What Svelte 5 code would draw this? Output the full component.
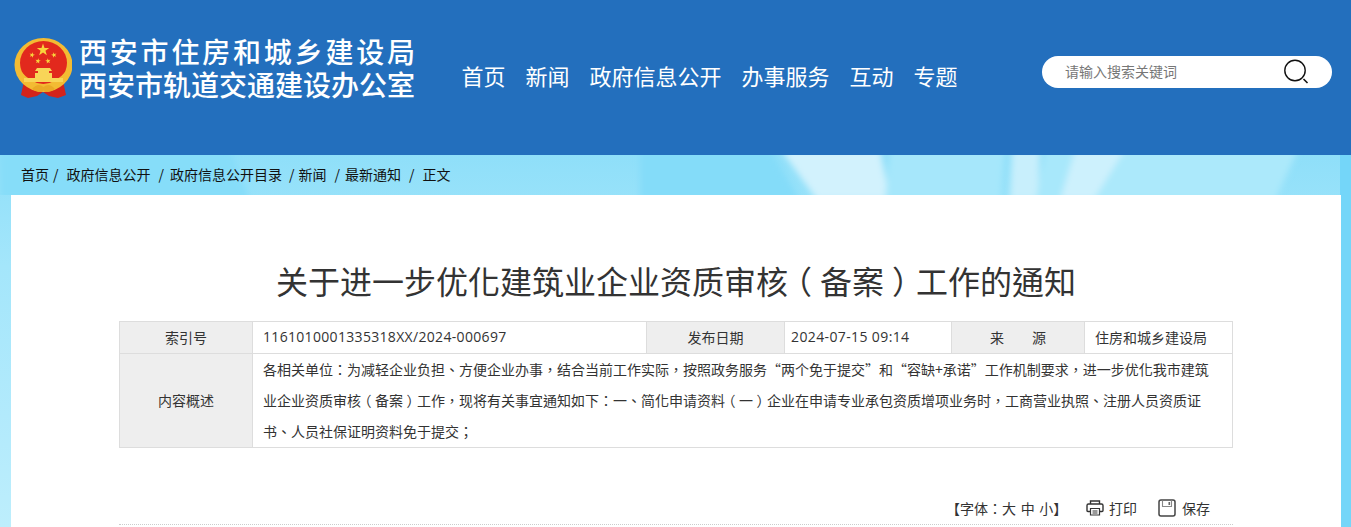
<script>
	// before / after: the gaps around each slash differ in the original markup
	const crumbs = [
		{ label: '首页', before: 4, after: 8 },
		{ label: '政府信息公开', before: 8, after: 6 },
		{ label: '政府信息公开目录', before: 7, after: 4 },
		{ label: '新闻', before: 8, after: 5 },
		{ label: '最新通知', before: 8, after: 8 }
	];
	const nav = ['首页', '新闻', '政府信息公开', '办事服务', '互动', '专题'];
	const title = '关于进一步优化建筑业企业资质审核（备案）工作的通知';
	const summary = [
		'各相关单位：为减轻企业负担、方便企业办事，结合当前工作实际，按照政务服务“两个免于提交”和“容缺+承诺”工作机制要求，进一步优化我市建筑',
		'业企业资质审核（备案）工作，现将有关事宜通知如下：一、简化申请资料（一）企业在申请专业承包资质增项业务时，工商营业执照、注册人员资质证',
		'书、人员社保证明资料免于提交；'
	];

	// the reference centres full-width brackets in their cell, so they get their own span
	const pieces = (text) => text.split(/([（）])/).filter(Boolean);
	const isBracket = (p) => p === '（' || p === '）';

	const star = (cx, cy, r, rot = 0) => {
		let pts = [];
		for (let i = 0; i < 10; i++) {
			const a = ((i * 36 - 90 + rot) * Math.PI) / 180;
			const d = i % 2 ? r * 0.4 : r;
			pts.push(`${(cx + d * Math.cos(a)).toFixed(2)},${(cy + d * Math.sin(a)).toFixed(2)}`);
		}
		return pts.join(' ');
	};
</script>

<div class="page">
	<header class="top">
		<div class="brand">
			<svg class="emblem" viewBox="0 0 58 62" width="58" height="62" aria-hidden="true">
				<path d="M10 44 L7 58 L14 61 L23 59 L29 55 L35 59 L44 61 L52 58 L49 44 Z" fill="#d3231b" />
				<ellipse cx="29.5" cy="28" rx="29" ry="27" fill="#f3bb33" />
				<ellipse cx="29.5" cy="26" rx="23.5" ry="22" fill="#e2291d" />
				<path d="M5 32 Q29 62 54 32 L50 46 Q29 58 9 46 Z" fill="#f3bb33" />
				<polygon points={star(29, 13, 6.5)} fill="#f9d33c" />
				<polygon points={star(18, 18, 2.9, 15)} fill="#f9d33c" />
				<polygon points={star(40, 18, 2.9, -15)} fill="#f9d33c" />
				<polygon points={star(24, 24, 2.9, 10)} fill="#f9d33c" />
				<polygon points={star(34, 24, 2.9, -10)} fill="#f9d33c" />
				<path d="M23 31 H36 L38 34 H35 V36 H38 V41 H21 V36 H24 V34 H21 Z" fill="#f8d558" />
				<rect x="10" y="41" width="39" height="4" fill="#f8d558" />
				<path d="M18 52 Q24 45 29.5 50 Q35 45 41 52 Q35 57 29.5 53.5 Q24 57 18 52 Z" fill="#eaa926" />
			</svg>
			<div class="names">
				<div class="first">西安市住房和城乡建设局</div>
				<div>西安市轨道交通建设办公室</div>
			</div>
		</div>
		<nav class="nav">
			{#each nav as item}
				<span>{item}</span>
			{/each}
		</nav>
		<div class="search">
			<span>请输入搜索关键词</span>
			<svg viewBox="0 0 26 26" width="26" height="26" aria-hidden="true">
				<circle cx="12" cy="11.5" r="10.2" fill="none" stroke="#111" stroke-width="1.4" />
				<path d="M20.5 20 L24.5 24" stroke="#111" stroke-width="1.6" fill="none" />
			</svg>
		</div>
	</header>

	<div class="lower">
		<svg class="rays" viewBox="0 0 1351 40" width="1351" height="40" aria-hidden="true">
			<defs>
				<filter id="soft"><feGaussianBlur stdDeviation="3" /></filter>
			</defs>
			<g filter="url(#soft)">
				<polygon points="0,-5 230,-5 250,45 0,45" fill="#86ddf9" />
				<polygon points="640,-5 770,-5 800,45 640,45" fill="#84dcf9" />
				<polygon points="781,-5 880,-5 890,45 817,45" fill="#d2f2fd" />
				<polygon points="890,-5 1005,-5 1000,45 885,45" fill="#a6e7fb" />
				<polygon points="1012,-5 1040,-5 1038,45 1010,45" fill="#c8effc" />
				<polygon points="1045,-5 1075,-5 1060,45 1036,45" fill="#a8e8fb" />
				<polygon points="1075,-5 1125,-5 1094,45 1060,45" fill="#cdf1fd" />
				<polygon points="1125,-5 1298,-5 1275,45 1094,45" fill="#ace9fb" />
			</g>
		</svg>

		<div class="crumbs">
			{#each crumbs as c}
				<span>{c.label}</span>
				<span style="margin: 0 {c.after}px 0 {c.before}px">/</span>
			{/each}
			<span>正文</span>
		</div>

		<main class="card">
			<h1>{#each pieces(title) as p}{#if isBracket(p)}<span class="bracket">{p}</span>{:else}{p}{/if}{/each}</h1>

			<table>
				<colgroup>
					<col class="c1" /><col class="c2" /><col class="c3" /><col class="c4" /><col class="c5" /><col class="c6" />
				</colgroup>
				<tbody>
					<tr class="meta">
						<th>索引号</th>
						<td class="num">1161010001335318XX/2024-000697</td>
						<th>发布日期</th>
						<td class="num date">2024-07-15 09:14</td>
						<th>来&emsp;&emsp;源</th>
						<td>住房和城乡建设局</td>
					</tr>
					<tr class="about">
						<th>内容概述</th>
						<td colspan="5" class="summary">
							{#each summary as line}
								<div>{#each pieces(line) as p}{#if isBracket(p)}<span class="bracket">{p}</span>{:else}{p}{/if}{/each}</div>
							{/each}
						</td>
					</tr>
				</tbody>
			</table>

			<div class="tools">
				<span class="size">【字体：大 中 小】</span>
				<span class="tool">
					<svg viewBox="0 0 18 16" width="18" height="16" aria-hidden="true">
						<path d="M4.5 4 V1 H13.5 V4" fill="none" stroke="#333" stroke-width="1.4" />
						<path d="M4 11.5 H2 Q1 11.5 1 10.5 V5.5 Q1 4 2.5 4 H15.5 Q17 4 17 5.5 V10.5 Q17 11.5 16 11.5 H14" fill="none" stroke="#333" stroke-width="1.4" />
						<path d="M4.5 8.5 H13.5 V15 H4.5 Z M6.5 11 H11.5 M6.5 13 H11.5" fill="none" stroke="#333" stroke-width="1.2" />
					</svg>
					打印
				</span>
				<span class="tool save">
					<svg viewBox="0 0 18 18" width="18" height="18" aria-hidden="true">
						<rect x="1" y="1" width="16" height="16" rx="2" fill="none" stroke="#444" stroke-width="1.5" />
						<path d="M4.5 1.5 V7.5 H13.5 V1.5" fill="none" stroke="#888" stroke-width="1.1" />
						<rect x="10.5" y="3" width="1.6" height="3" fill="#666" />
					</svg>
					保存
				</span>
			</div>
			<div class="rule"></div>
		</main>
	</div>
</div>

<style>
	:global(body) {
		margin: 0;
		background: #74d6f9;
	}

	.page {
		height: 527px;
		overflow: hidden;
		font-family: "Noto Sans CJK SC", sans-serif;
		color: #333;
	}

	.top {
		height: 155px;
		background: #236fbd;
		display: flex;
		box-sizing: border-box;
		padding-top: 37px;
		padding-left: 14px;
		color: #fff;
		align-items: flex-start;
	}

	.brand {
		display: flex;
		width: 447.5px;
		flex: none;
	}

	.emblem {
		flex: none;
	}

	.names {
		font-size: 28px;
		font-weight: 500;
		line-height: 33px;
		white-space: nowrap;
		margin-top: -2px;
		margin-left: 7px;
	}

	.first {
		letter-spacing: 2.8px;
	}

	.nav {
		display: flex;
		gap: 20px;
		width: 580.5px;
		flex: none;
		font-size: 22px;
		line-height: 30px;
		margin-top: 23px;
	}

	.search {
		width: 290px;
		height: 32px;
		margin-top: 19px;
		border-radius: 16px;
		background: #fff;
		display: flex;
		align-items: center;
		justify-content: space-between;
		padding: 0 23px 2px 23px;
		box-sizing: border-box;
		color: #777;
		font-size: 14px;
	}

	.search svg {
		margin-top: 2px;
	}

	.lower {
		position: relative;
		height: 372px;
		background: linear-gradient(180deg, #8fdff9 0%, #a4e6fb 30%, #b2eafc 70%, #bdeefc 100%);
		background-size: 1340px 100%;
		background-repeat: no-repeat;
	}

	/* sun rays painted behind the breadcrumb */
	.rays {
		position: absolute;
		top: 0;
		left: 0;
	}

	.crumbs {
		position: relative;
		height: 40px;
		box-sizing: border-box;
		padding: 0 0 2px 21px;
		display: flex;
		align-items: center;
		font-size: 14px;
		color: #111;
	}

	.card {
		position: relative;
		margin: 0 10px 0 11px;
		height: 332px;
		background: #fff;
		box-sizing: border-box;
		padding: 62px 108px 0;
	}

	h1 {
		margin: 0;
		font-family: "Noto Sans CJK TC", sans-serif;
		font-size: 32px;
		font-weight: 400;
		line-height: 46px;
		text-align: center;
	}

	/* half-width bracket glyph, padded back out to one em */
	.bracket {
		font-feature-settings: "halt";
		margin: 0 0.25em;
	}

	table {
		margin-top: 18px;
		width: 1113px;
		table-layout: fixed;
		border-collapse: collapse;
		font-size: 14px;
	}

	.c1 { width: 133px; }
	.c2 { width: 394px; }
	.c3 { width: 138px; }
	.c4 { width: 167px; }
	.c5 { width: 133px; }
	.c6 { width: 148px; }

	th,
	td {
		border: 1px solid #ddd;
		padding: 0 10px;
		font-weight: 400;
		box-sizing: border-box;
	}

	th {
		background: #eee;
		text-align: center;
	}

	td {
		text-align: left;
	}

	.meta th,
	.meta td {
		height: 32px;
		padding-bottom: 2px;
	}

	.about th,
	.about td {
		height: 94px;
	}

	.about th {
		padding-bottom: 2px;
	}

	.num {
		font-family: "Open Sans", "Noto Sans CJK SC", sans-serif;
		letter-spacing: 0.32px;
	}

	.date {
		padding-left: 6px;
		letter-spacing: 0.38px;
	}

	.summary {
		font-family: "Noto Sans CJK TC", sans-serif;
		line-height: 31px;
		white-space: nowrap;
	}

	.tools {
		display: flex;
		align-items: center;
		height: 24px;
		margin-top: 48px;
		padding-left: 827px;
		font-size: 14px;
	}

	.size {
		width: 140px;
		flex: none;
		font-family: "Noto Sans CJK TC", sans-serif;
		word-spacing: 1.5px;
	}

	.tool {
		display: flex;
		align-items: center;
		gap: 5px;
		white-space: nowrap;
	}

	.save {
		margin-left: 21px;
		gap: 6px;
	}

	.rule {
		margin-top: 4px;
		border-top: 1px dotted #ccc;
	}
</style>
